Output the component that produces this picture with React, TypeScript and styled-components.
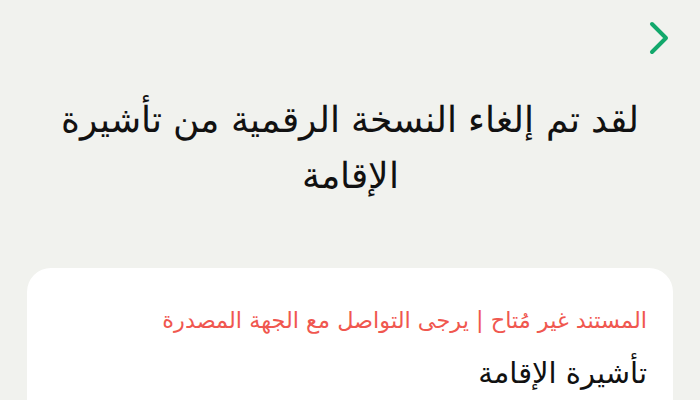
import React from "react";
import styled, { createGlobalStyle } from "styled-components";

const GlobalStyle = createGlobalStyle`
  html, body {
    margin: 0;
    padding: 0;
    background: #f1f2ee;
  }
  body {
    font-family: "DejaVu Sans", "Noto Sans", sans-serif;
  }
`;

const Screen = styled.div`
  width: 700px;
  height: 400px;
  overflow: hidden;
  background: #f1f2ee;
  display: flex;
  flex-direction: column;
  direction: rtl;
`;

const TopBar = styled.div`
  display: flex;
  justify-content: flex-start;
  padding: 20px 30px 0 0;
  height: 36px;
`;

const BackButton = styled.button`
  background: none;
  border: none;
  padding: 0;
  width: 24px;
  height: 36px;
  display: flex;
  align-items: center;
  justify-content: center;
  cursor: pointer;
`;

const Heading = styled.h1`
  margin: 36px 30px 0;
  text-align: center;
  font-size: 35.5px;
  font-weight: 300;
  line-height: 56px;
  color: #111;
`;

const Card = styled.div`
  margin: 64px 27px 0;
  background: #fff;
  border-radius: 24px;
  padding: 37px 26px 60px;
  display: flex;
  flex-direction: column;
  gap: 20px;
`;

const Notice = styled.div`
  color: #f0574f;
  font-size: 22.4px;
  line-height: 30px;
`;

const DocTitle = styled.div`
  color: #111;
  font-size: 29px;
  line-height: 36px;
`;

const Chevron = () => (
  <svg width="22" height="36" viewBox="0 0 22 36" fill="none">
    <path
      d="M5 4 L19 18 L5 32"
      stroke="#12a86b"
      strokeWidth="4"
      strokeLinecap="round"
      strokeLinejoin="round"
    />
  </svg>
);

export default function App() {
  return (
    <>
      <GlobalStyle />
      <Screen>
        <TopBar>
          <BackButton aria-label="رجوع">
            <Chevron />
          </BackButton>
        </TopBar>
        <Heading>لقد تم إلغاء النسخة الرقمية من تأشيرة الإقامة</Heading>
        <Card>
          <Notice>المستند غير مُتاح | يرجى التواصل مع الجهة المصدرة</Notice>
          <DocTitle>تأشيرة الإقامة</DocTitle>
        </Card>
      </Screen>
    </>
  );
}
